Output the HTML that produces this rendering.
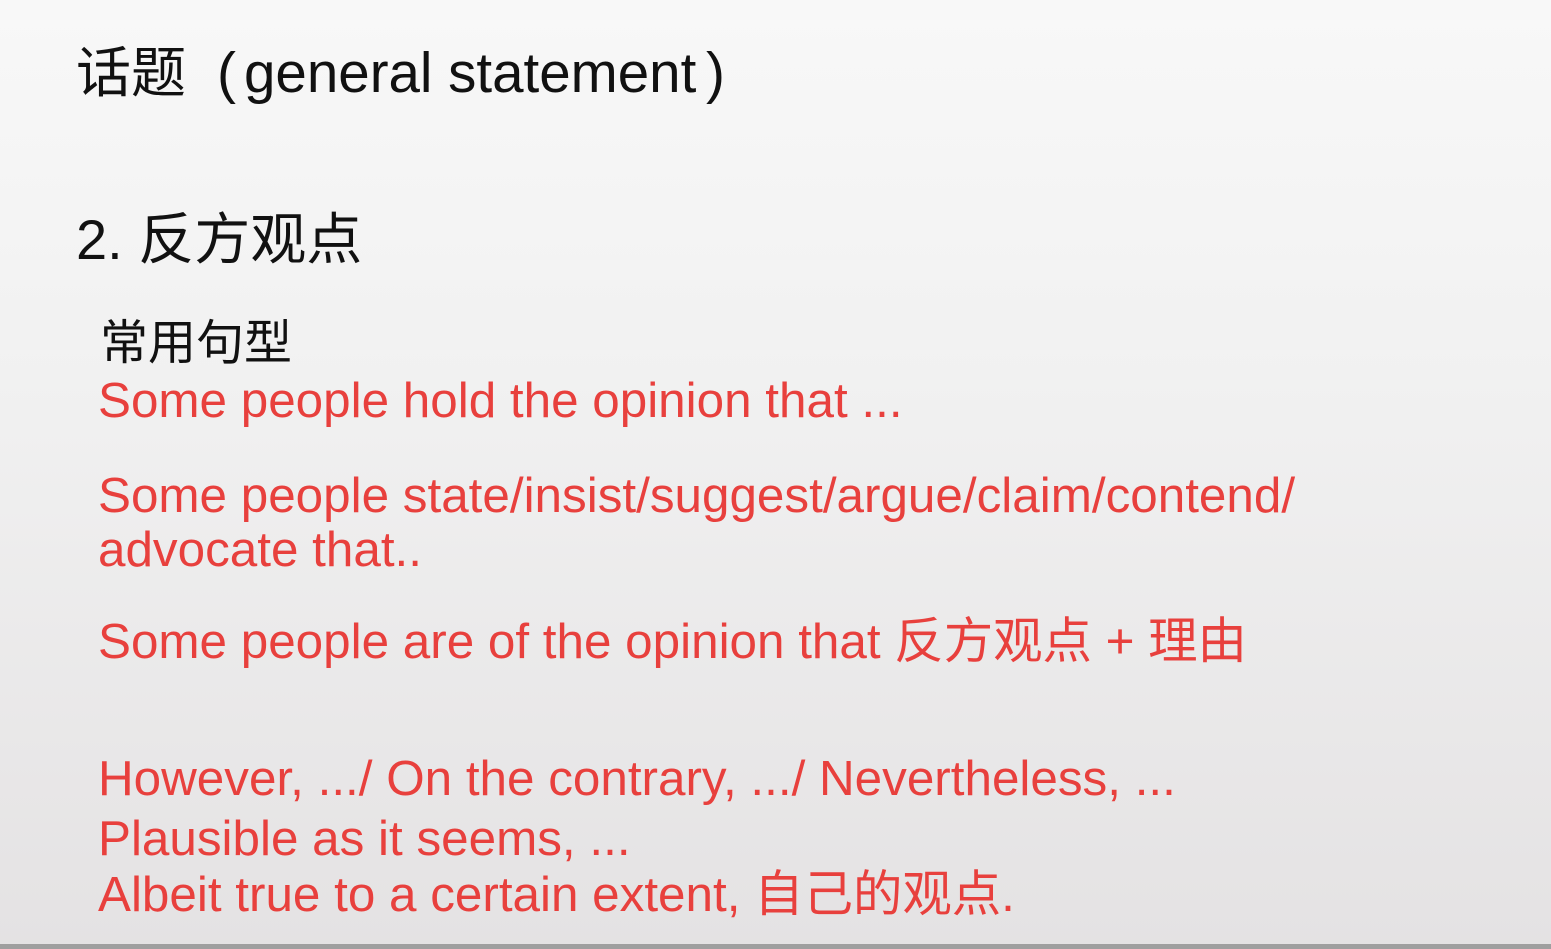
<!DOCTYPE html>
<html><head><meta charset="utf-8"><style>
html,body{margin:0;padding:0}
body{width:1551px;height:949px;position:relative;overflow:hidden;background:linear-gradient(#f8f8f8,#f1f1f1 40%,#e4e2e3);font-family:"Liberation Sans","Noto Sans CJK SC",sans-serif}
.t{position:absolute;white-space:nowrap;line-height:1}
.k{color:#111}
.r{color:#e8403d;font-size:49.4px;left:98px}
.bar{position:absolute;left:0;right:0;bottom:0;height:5px;background:#9f9f9f}
</style></head><body>
<div class="t k" style="left:76px;top:46px;font-size:55px">话题</div>
<div class="t k" style="left:217px;top:45px;font-size:57px">(</div>
<div class="t k" style="left:244px;top:45px;font-size:56.5px">general statement</div>
<div class="t k" style="left:706px;top:45px;font-size:57px">)</div>
<div class="t k" style="left:76px;top:212px;font-size:56px">2. 反方观点</div>
<div class="t k" style="left:100px;top:320px;font-size:48px">常用句型</div>
<div class="t r" style="top:376px">Some people hold the opinion that ...</div>
<div class="t r" style="top:471px">Some people state/insist/suggest/argue/claim/contend/</div>
<div class="t r" style="top:525px">advocate that..</div>
<div class="t r" style="top:617px">Some people are of the opinion that 反方观点 + 理由</div>
<div class="t r" style="top:754px">However, .../ On the contrary, .../ Nevertheless, ...</div>
<div class="t r" style="top:814px">Plausible as it seems, ...</div>
<div class="t r" style="top:870px">Albeit true to a certain extent, 自己的观点.</div>
<div class="bar"></div>
</body></html>
